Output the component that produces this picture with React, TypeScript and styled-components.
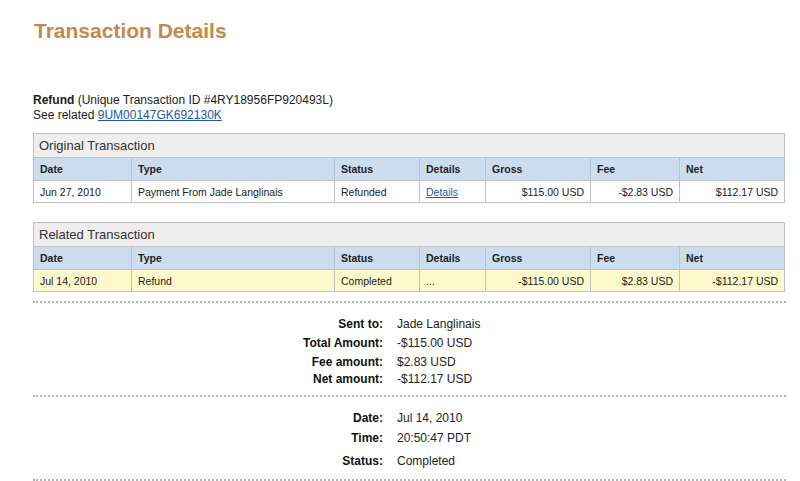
import React from 'react';
import styled, { createGlobalStyle } from 'styled-components';

type Row = {
    date: string
    type: string
    status: string
    details: string
    link?: boolean
    gross: string
    fee: string
    net: string
}

type TxTableProps = {
    title: string
    row: Row
    highlight?: boolean
    gap?: number
}

const GlobalStyle = createGlobalStyle`
    body {
        margin: 0;
        background: #fff;
        font-family: Arial, "Liberation Sans", sans-serif;
        color: #222;
    }
`

const Page = styled.div`
    width: 752px;
    padding: 20px 0 0 33px;
`

const Heading = styled.h1`
    margin: 0 0 0 1px;
    font-size: 21px;
    line-height: 22px;
    font-weight: 700;
    color: #c8874b;
`

const Intro = styled.div`
    margin-top: 51px;
    font-size: 12px;
    line-height: 15px;
    color: #222;
`

const Link = styled.a`
    color: #1d58a6;
    text-decoration: underline;
`

const Table = styled.table<{ $gap?: number }>`
    width: 751px;
    margin-top: ${p => p.$gap ?? 0}px;
    border-collapse: collapse;
    border: 1px solid #c2c2c2;
    font-size: 10.5px;
    table-layout: fixed;
`

const TitleCell = styled.th`
    height: 23px;
    padding: 0 5px;
    background: #eeeeee;
    border: 1px solid #c2c2c2;
    text-align: left;
    font-size: 13px;
    font-weight: 400;
    color: #333;
`

const HeadCell = styled.th`
    height: 22px;
    padding: 0 6px;
    background: #cbddef;
    border: 1px solid #b6c3cf;
    text-align: left;
    font-weight: 700;
    color: #222;
`

const Cell = styled.td<{ $right?: boolean; $yellow?: boolean }>`
    height: 21px;
    padding: 0 6px;
    background: ${p => (p.$yellow ? '#fdf9cc' : '#fff')};
    border: 1px solid #c2c2c2;
    text-align: ${p => (p.$right ? 'right' : 'left')};
    color: #222;
    white-space: nowrap;
`

const Divider = styled.div<{ $top?: number }>`
    width: 753px;
    margin-top: ${p => p.$top ?? 0}px;
    border-top: 2px dotted #b4b4b4;
`

const Summary = styled.div<{ $top: number; $bottom: number }>`
    padding: ${p => p.$top}px 0 ${p => p.$bottom}px;
`

const Line = styled.div<{ $gap?: number }>`
    display: grid;
    grid-template-columns: 350px auto;
    column-gap: 14px;
    margin-top: ${p => p.$gap ?? 0}px;
    font-size: 12px;
    line-height: 16px;
`

const Label = styled.span`
    text-align: right;
    font-weight: 700;
    color: #111;
`

const Value = styled.span`
    color: #222;
`

const widths = [98, 203, 85, 66, 105, 89, 105]
const heads = ['Date', 'Type', 'Status', 'Details', 'Gross', 'Fee', 'Net']

const TxTable = ({ title, row, highlight = false, gap }: TxTableProps) => (
    <Table $gap={gap}>
        <colgroup>
            {widths.map((w, i) => <col key={i} style={{ width: w }} />)}
        </colgroup>
        <thead>
            <tr><TitleCell colSpan={7}>{title}</TitleCell></tr>
            <tr>{heads.map(h => <HeadCell key={h}>{h}</HeadCell>)}</tr>
        </thead>
        <tbody>
            <tr>
                <Cell $yellow={highlight}>{row.date}</Cell>
                <Cell $yellow={highlight}>{row.type}</Cell>
                <Cell $yellow={highlight}>{row.status}</Cell>
                <Cell $yellow={highlight}>{row.link ? <Link href="#">{row.details}</Link> : row.details}</Cell>
                <Cell $yellow={highlight} $right>{row.gross}</Cell>
                <Cell $yellow={highlight} $right>{row.fee}</Cell>
                <Cell $yellow={highlight} $right>{row.net}</Cell>
            </tr>
        </tbody>
    </Table>
)

const App = () => {
    return (
        <Page>
            <GlobalStyle />
            <Heading>Transaction Details</Heading>
            <Intro>
                <div><b>Refund</b> (Unique Transaction ID #4RY18956FP920493L)</div>
                <div>See related <Link href="#">9UM00147GK692130K</Link></div>
            </Intro>

            <TxTable
                gap={10}
                title="Original Transaction"
                row={{ date: 'Jun 27, 2010', type: 'Payment From Jade Langlinais', status: 'Refunded', details: 'Details', link: true, gross: '$115.00 USD', fee: '-$2.83 USD', net: '$112.17 USD' }}
            />
            <TxTable
                gap={19}
                highlight
                title="Related Transaction"
                row={{ date: 'Jul 14, 2010', type: 'Refund', status: 'Completed', details: '...', gross: '-$115.00 USD', fee: '$2.83 USD', net: '-$112.17 USD' }}
            />

            <Divider $top={9} />
            <Summary $top={13} $bottom={8}>
                <Line><Label>Sent to:</Label><Value>Jade Langlinais</Value></Line>
                <Line $gap={3}><Label>Total Amount:</Label><Value>-$115.00 USD</Value></Line>
                <Line $gap={3}><Label>Fee amount:</Label><Value>$2.83 USD</Value></Line>
                <Line $gap={1}><Label>Net amount:</Label><Value>-$112.17 USD</Value></Line>
            </Summary>
            <Divider />
            <Summary $top={13} $bottom={10}>
                <Line><Label>Date:</Label><Value>Jul 14, 2010</Value></Line>
                <Line $gap={4}><Label>Time:</Label><Value>20:50:47 PDT</Value></Line>
                <Line $gap={7}><Label>Status:</Label><Value>Completed</Value></Line>
            </Summary>
            <Divider />
        </Page>
    )
}

export default App
